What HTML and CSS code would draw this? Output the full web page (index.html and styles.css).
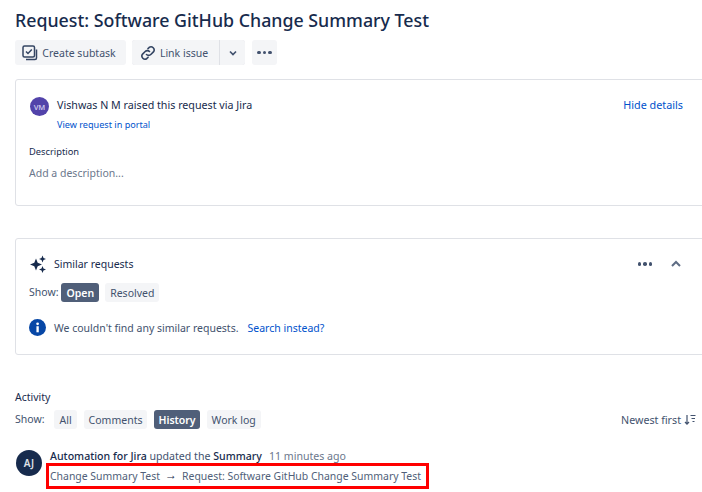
FILE: index.html
```html
<!DOCTYPE html>
<html lang="en">
<head>
<meta charset="utf-8">
<title>Request</title>
<link rel="stylesheet" href="styles.css">
</head>
<body>
<main class="page">
  <h1 class="title">Request: Software GitHub Change Summary Test</h1>
  <div class="toolbar">
    <button class="btn"><svg class="ic16" viewBox="0 0 16 16"><rect x="1" y="1" width="11.500" height="11" rx="1.500" fill="none" stroke="#344563" stroke-width="1.500"/><path d="M4 6.500l2 2 3.800-4" fill="none" stroke="#344563" stroke-width="1.500"/><path d="M14.500 4.500V13a1.500 1.500 0 0 1-1.500 1.500H4" fill="none" stroke="#344563" stroke-width="1.500"/></svg>Create subtask</button>
    <div class="split">
      <button class="btn btn-main"><svg class="ic16" viewBox="0 0 16 16"><path d="M6.500 9.500a3 3 0 0 0 4.300 0l2.600-2.600a3.100 3.100 0 0 0-4.300-4.400L8 3.600M9.500 6.500a3 3 0 0 0-4.300 0L2.600 9.100a3.100 3.100 0 0 0 4.300 4.400L8 12.400" fill="none" stroke="#344563" stroke-width="1.600" stroke-linecap="round"/></svg>Link issue</button>
      <button class="btn btn-caret"><svg class="ic8" viewBox="0 0 8 8"><path d="M1 2.500l3 3 3-3" fill="none" stroke="#42526e" stroke-width="1.700"/></svg></button>
    </div>
    <button class="btn btn-more"><span class="dots"><i></i><i></i><i></i></span></button>
  </div>

  <section class="card card-request">
    <div class="raised">
      <span class="avatar avatar-vm">VM</span>
      <div class="raised-text">
        <div class="raised-line"><span>Vishwas N M raised this request via Jira</span><a class="link hide">Hide details</a></div>
        <a class="link small">View request in portal</a>
      </div>
    </div>
    <h2 class="label">Description</h2>
    <p class="placeholder">Add a description...</p>
  </section>

  <section class="card card-similar">
    <div class="similar-head">
      <svg class="sparkle" viewBox="0 0 18 18"><path d="M7 3.500l1.700 4.300L13 9.500l-4.300 1.700L7 15.500l-1.700-4.300L1 9.500l4.300-1.700zM13.500 0.500l1 2.500 2.500 1-2.500 1-1 2.500-1-2.500-2.500-1 2.500-1zM13.500 11l1 2.500 2.500 1-2.500 1-1 2.500-1-2.500-2.500-1 2.500-1z" fill="#172b4d"/></svg>
      <span class="similar-title">Similar requests</span>
      <span class="dots dots-head"><i></i><i></i><i></i></span>
      <svg class="ic-up" viewBox="0 0 10 8"><path d="M1 6l4-4 4 4" fill="none" stroke="#5e6c84" stroke-width="2"/></svg>
    </div>
    <div class="show-row show-similar">
      <span class="show">Show:</span>
      <span class="chip chip-active">Open</span>
      <span class="chip chip-gap">Resolved</span>
    </div>
    <div class="notice">
      <svg class="ic-info" viewBox="0 0 16 16"><circle cx="8" cy="8" r="8" fill="#0747a6"/><rect x="7" y="6.800" width="2.200" height="5.700" fill="#fff"/><circle cx="8.100" cy="4.500" r="1.300" fill="#fff"/></svg>
      <span>We couldn't find any similar requests.</span>
      <a class="link">Search instead?</a>
    </div>
  </section>

  <section class="activity">
    <h2 class="activity-title">Activity</h2>
    <div class="show-row show-activity">
      <span class="show">Show:</span>
      <span class="chip">All</span>
      <span class="chip">Comments</span>
      <span class="chip chip-active">History</span>
      <span class="chip">Work log</span>
      <span class="sort">Newest first <svg class="ic-sort" viewBox="0 0 12 12"><path d="M3 1v9M1 8l2 2.200L5 8" fill="none" stroke="#42526e" stroke-width="1.200"/><path d="M6.500 1.500h5M7.500 4.500h3.500M8.500 7.500h2" fill="none" stroke="#42526e" stroke-width="1.200"/></svg></span>
    </div>
    <div class="entry">
      <span class="avatar avatar-aj">AJ</span>
      <div class="entry-body">
        <div class="entry-head"><b>Automation for Jira</b> updated the <b>Summary</b><span class="ago">11 minutes ago</span></div>
        <div class="change">Change Summary Test<span class="arrow">→</span>Request: Software GitHub Change Summary Test</div>
      </div>
    </div>
  </section>
</main>
</body>
</html>
```

FILE: styles.css
```css
* { box-sizing: border-box; }
html, body { margin: 0; height: 100%; overflow: hidden; background: #fff; }
body { font-family: "Noto Sans", "Open Sans", sans-serif; font-size: 11px; color: #172b4d; }
.page { padding: 8px 0 0 15px; width: 702px; }
.title { margin: 0; font-size: 17.800px; line-height: 24px; font-weight: 500; color: #172b4d; height: 32px; }
.toolbar { display: flex; gap: 6px; height: 25px; }
.btn { display: flex; align-items: center; justify-content: center; height: 25px; padding: 0 3px 0 0; border: 0; border-radius: 3px; background: #f4f5f7; color: #42526e; font: inherit; font-size: 10.500px; gap: 4px; width: 111px; }
.ic16 { width: 16px; height: 16px; }
.ic8 { width: 8px; height: 8px; }
.split { display: flex; width: 113px; gap: 1px; background: #dfe1e6; border-radius: 3px; overflow: hidden; }
.btn-main { width: 87px; border-radius: 0; }
.btn-caret { width: 25px; border-radius: 0; padding: 0; }
.btn-more { width: 25px; margin-left: 1px; padding: 0; }
.dots { display: inline-flex; gap: 2px; }
.dots i { display: block; width: 3.500px; height: 3.500px; border-radius: 50%; background: #42526e; }
.card { width: 700px; border: 1px solid #dfe1e6; border-radius: 3px; padding-left: 14px; }
.card-request { margin-top: 14px; height: 127px; padding-top: 16px; }
.raised { display: flex; gap: 8px; }
.avatar { flex: none; display: flex; align-items: center; justify-content: center; border-radius: 50%; color: #fff; }
.avatar-vm { width: 19px; height: 19px; background: #5243aa; font-size: 7.500px; font-weight: 600; color: #c9c3ea; margin-top: 1px; }
.raised-text { flex: 1; }
.raised-line { display: flex; justify-content: space-between; line-height: 18px; font-size: 10.700px; padding-right: 31px; }
.hide { font-size: 10.800px; }
.link { color: #0052cc; }
.small { display: block; font-size: 9.100px; line-height: 14px; margin-top: 4px; }
.label { margin: 13px 0 0 -1px; font-size: 9.300px; font-weight: 400; line-height: 14px; color: #172b4d; }
.placeholder { margin: 7px 0 0 -1px; font-size: 10.500px; line-height: 14px; color: #6b778c; }
.card-similar { margin-top: 32px; height: 117px; padding-top: 15px; }
.similar-head { display: flex; align-items: center; height: 20px; }
.sparkle { width: 18px; height: 18px; margin: 0 7px 0 -1px; }
.similar-title { flex: 1; font-size: 10.500px; }
.dots-head { margin-right: 19px; }
.ic-up { width: 10px; height: 8px; margin-right: 33px; }
.show-row { display: flex; align-items: center; }
.show { color: #42526e; font-size: 10.500px; }
.chip { display: flex; align-items: center; height: 19px; padding: 0 5px; border-radius: 3px; background: #f4f5f7; color: #42526e; font-size: 10.500px; }
.chip-active { background: #505f79; color: #fff; font-weight: 600; }
.show-similar { margin-top: 9px; gap: 3px; }
.show-similar .show { margin: -2px 0 0 -1px; }
.chip-gap { margin-left: 3px; }
.notice { display: flex; align-items: center; gap: 8px; margin-top: 17px; font-size: 10.500px; color: #42526e; }
.notice .link { margin-left: 1px; }
.ic-info { width: 17px; height: 17px; flex: none; margin-left: -1px; }
.activity { margin-top: 35px; }
.activity-title { margin: 0; font-size: 10.500px; line-height: 14px; font-weight: 400; color: #172b4d; }
.show-activity { margin-top: 6px; gap: 7px; width: 681px; }
.show-activity .show { margin: -2px 3px 0 0; }
.show-activity .chip-active { padding: 0 4px; }
.sort { margin-left: auto; display: flex; align-items: center; gap: 3px; color: #42526e; font-size: 10.700px; }
.ic-sort { width: 12px; height: 12px; }
.entry { display: flex; gap: 8px; margin-top: 21px; padding-left: 1px; }
.avatar-aj { width: 26px; height: 26px; background: #172b4d; font-size: 10px; font-weight: 600; color: #dfe1e6; }
.entry-body { font-size: 10.600px; color: #42526e; }
.entry-head { line-height: 14px; margin-top: -1px; }
.entry-head b { font-weight: 500; color: #172b4d; }
.ago { margin-left: 7px; color: #6b778c; }
.change { margin: 0 0 0 -4px; width: 383px; height: 26px; padding-left: 1px; display: flex; align-items: center; border: 3px solid #f00; color: #505f79; white-space: nowrap; font-size: 10.450px; }
.arrow { margin: -3px 5px 0; color: #172b4d; font-size: 12px; line-height: 1; }
```
